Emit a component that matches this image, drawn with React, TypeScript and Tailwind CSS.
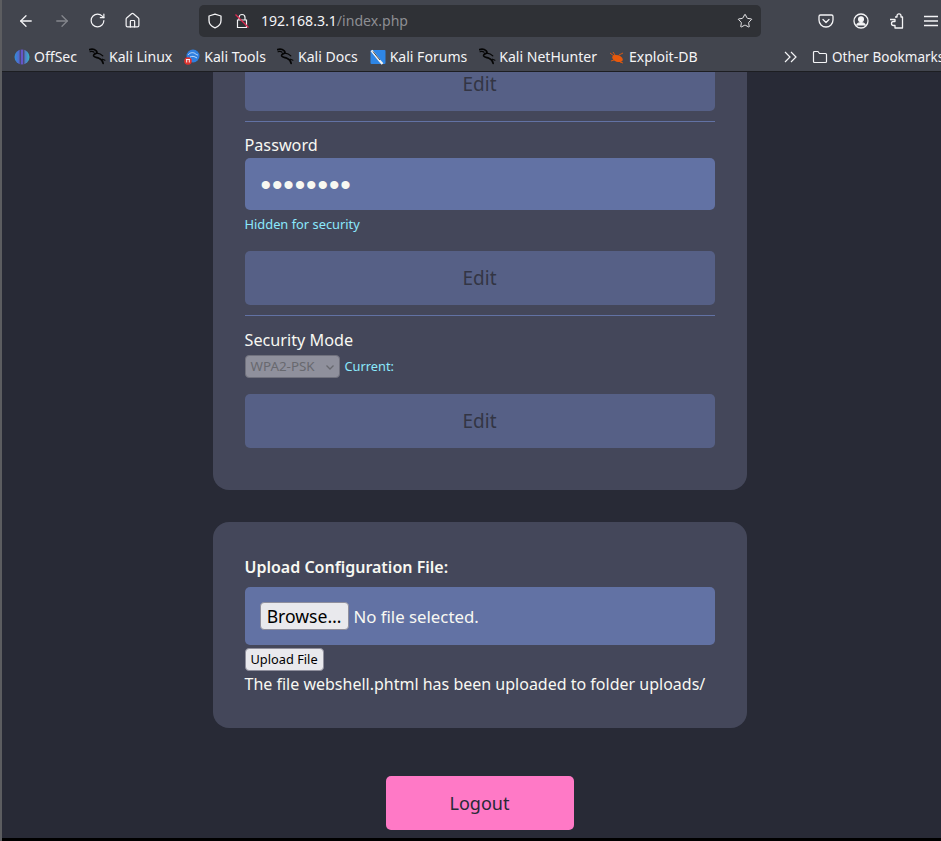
import React from 'react';
import { ArrowLeft, ArrowRight, RotateCw, Home, Star } from 'lucide-react';

const KaliIcon = () => (
    <svg viewBox="0 0 16 16" className="h-[17px] w-[17px] shrink-0" fill="none" stroke="#050505" strokeWidth="1.600" strokeLinecap="round" strokeLinejoin="round">
        <path d="M0.500 1.500c2.500-.8 4.800-.2 6.300 1.200 1 1 .9 2-.2 2.400-1.500.5-2.700 1.300-2.100 2.600.6 1.200 2.800 1.200 4.800 1.900 2.200.8 3.600 2.500 4 4.900" />
        <path d="M7.500 4.800c2 .2 4 1 5.500 2.600" strokeWidth="1.100" />
        <path d="M1 3.500c1.500-.5 2.800-.3 3.800.5" strokeWidth="1.100" />
        <path d="M12.500 10.500l2.500 1" strokeWidth="1" />
    </svg>
);

const OffSecIcon = () => (
    <svg viewBox="0 0 16 16" className="h-4 w-4 shrink-0">
        <defs>
            <linearGradient id="offsec" x1="0" y1="0" x2="1" y2="0">
                <stop offset="0" stopColor="#2f8fd8" />
                <stop offset="0.5" stopColor="#6a4fc8" />
                <stop offset="1" stopColor="#35b6c8" />
            </linearGradient>
        </defs>
        <circle cx="8" cy="8" r="7.500" fill="url(#offsec)" />
        <path d="M6.200 0.500v15M9.800 0.500v15" stroke="#42454e" strokeWidth="1" />
    </svg>
);

const KaliToolsIcon = () => (
    <svg viewBox="0 0 16 16" className="h-4 w-4 shrink-0">
        <circle cx="9" cy="7" r="6.500" fill="#2f7fe0" />
        <path d="M4 6c2-2.500 5-3 7-1.500 1 .8 2 1.500 3 1.500M6 8c2-1 4-1 7 1" stroke="#cfe4fb" strokeWidth="0.900" fill="none" />
        <circle cx="4" cy="12" r="3.800" fill="#e0322e" />
        <path d="M2.700 10.500v3M5.300 10.500v3M2 10.500h4" stroke="#fff" strokeWidth="0.900" />
    </svg>
);

const ForumsIcon = () => (
    <svg viewBox="0 0 16 16" className="h-4 w-4 shrink-0">
        <rect x="0.500" y="1" width="15" height="14" rx="1" fill="#2e86e6" />
        <path d="M1.500 1.500l8 10 3 3.500" stroke="#f2f2f2" strokeWidth="2.200" fill="none" />
        <path d="M3 2.500l7 8.500" stroke="#222" strokeWidth="0.800" fill="none" />
    </svg>
);

const ExploitIcon = () => (
    <svg viewBox="0 0 16 16" className="h-4 w-4 shrink-0">
        <ellipse cx="8.500" cy="9.500" rx="5.500" ry="3.300" fill="#e8590c" transform="rotate(18 8.500 9.500)" />
        <path d="M1 4l4 3M4 3l2 3M10 6l4-2M2 12l3-1M11 13l3 1" stroke="#e8590c" strokeWidth="0.900" />
    </svg>
);

const Bookmark = ({ icon, label }: { icon: React.ReactNode; label: string }) => (
    <div className="flex items-center gap-1 whitespace-nowrap">
        <div className="flex w-4 justify-center">{icon}</div>
        <span>{label}</span>
    </div>
);

const EditButton = ({ className = '' }: { className?: string }) => (
    <button
        type="button"
        disabled
        className={`h-[54px] w-full rounded-[5px] bg-[#6272a4] text-[19px] text-[#282a36] opacity-60 ${className}`}
    >
        Edit
    </button>
);

const Toolbar = () => (
    <div className="shrink-0 bg-[#42454e] text-[#f4f4f6]">
        <div className="flex h-[41px] items-center">
            <div className="flex w-[199px] items-center pl-[17px]">
                <ArrowLeft className="h-[18px] w-[18px]" strokeWidth={1.7} />
                <ArrowRight className="ml-[18px] h-[18px] w-[18px] text-[#85878d]" strokeWidth={1.7} />
                <RotateCw className="ml-[18px] h-[17px] w-[17px]" strokeWidth={1.7} />
                <Home className="ml-[18px] h-[17px] w-[17px]" strokeWidth={1.7} />
            </div>
            <div className="flex h-8 w-[562px] items-center rounded-[5px] bg-[#2f3136] pl-[8px] pr-[8px]">
                <svg viewBox="0 0 16 16" className="h-4 w-4" fill="none" stroke="#f4f4f6" strokeWidth="1.300">
                    <path d="M8 1.200l6 1.800v4.500c0 3.500-2.500 6-6 7.300-3.500-1.300-6-3.800-6-7.300V3z" strokeLinejoin="round" />
                </svg>
                <svg viewBox="0 0 16 16" className="ml-[11px] h-4 w-4" fill="none" strokeWidth="1.200">
                    <path d="M5 7V4.500a3 3 0 016 0V7M3.500 7h9v7.500h-9z" stroke="#f4f4f6" />
                    <path d="M1.500 1.500l13 13" stroke="#e22850" />
                </svg>
                <span className="ml-[11px] text-[14.100px]">
                    192.168.3.1<span className="text-[#8d8e93]">/index.php</span>
                </span>
                <Star className="ml-auto h-4 w-4" strokeWidth={1.4} />
            </div>
            <div className="flex flex-1 items-center pl-[57px]">
                <svg viewBox="0 0 16 16" className="h-4 w-4" fill="none" stroke="#f4f4f6" strokeWidth="1.300" strokeLinecap="round" strokeLinejoin="round">
                    <path d="M2.500 2h11a1.500 1.500 0 011.500 1.500V7a7 7 0 01-14 0V3.500A1.500 1.500 0 012.500 2z" />
                    <path d="M5 6.500l3 3 3-3" />
                </svg>
                <svg viewBox="0 0 16 16" className="ml-[19px] h-4 w-4" fill="none" stroke="#f4f4f6" strokeWidth="1.300">
                    <circle cx="8" cy="8" r="7" />
                    <circle cx="8" cy="6.200" r="2.400" fill="#f4f4f6" />
                    <path d="M3.500 12.500c1-2 2.500-2.800 4.500-2.800s3.500.8 4.500 2.800" fill="#f4f4f6" />
                </svg>
                <svg viewBox="0 0 16 16" className="ml-[19px] h-4 w-4" fill="none" stroke="#f4f4f6" strokeWidth="1.300" strokeLinejoin="round">
                    <path d="M7 4h2V2.800a2 2 0 014 0V4h1.500v11H7v-2.500H5.500a2 2 0 010-4H7V6.500H2" />
                </svg>
                <svg viewBox="0 0 16 16" className="ml-[19px] h-4 w-4" stroke="#f4f4f6" strokeWidth="1.300">
                    <path d="M1 3.500h14M1 8h14M1 12.500h14" />
                </svg>
            </div>
        </div>
        <div className="flex h-[31px] items-center overflow-hidden border-b border-[#1d1e22] pl-[14px] pt-px text-[14.050px]">
            <div className="flex w-[763px] shrink-0 items-center gap-3">
                <Bookmark icon={<OffSecIcon />} label="OffSec" />
                <Bookmark icon={<KaliIcon />} label="Kali Linux" />
                <Bookmark icon={<KaliToolsIcon />} label="Kali Tools" />
                <Bookmark icon={<KaliIcon />} label="Kali Docs" />
                <Bookmark icon={<ForumsIcon />} label="Kali Forums" />
                <Bookmark icon={<KaliIcon />} label="Kali NetHunter" />
                <Bookmark icon={<ExploitIcon />} label="Exploit-DB" />
            </div>
            <svg viewBox="0 0 16 16" className="ml-[6px] h-4 w-4 shrink-0" fill="none" stroke="#f4f4f6" strokeWidth="1.200">
                <path d="M2 3l5 5-5 5M8 3l5 5-5 5" />
            </svg>
            <div className="ml-[13px] flex shrink-0 items-center gap-1 whitespace-nowrap">
                <svg viewBox="0 0 16 16" className="h-4 w-4" fill="none" stroke="#f4f4f6" strokeWidth="1.200" strokeLinejoin="round">
                    <path d="M1.500 3.500a1 1 0 011-1h3.500l1.500 2h6a1 1 0 011 1v7a1 1 0 01-1 1h-11a1 1 0 01-1-1z" />
                </svg>
                <span className="pt-px text-[13.500px]">Other Bookmarks</span>
            </div>
        </div>
    </div>
);

export default function App() {
    return (
        <div className="flex h-[841px] w-[941px] flex-col overflow-hidden border-l-2 border-[#5c5d60] bg-[#282a36] font-['Noto_Sans',sans-serif] text-[#f8f8f2]">
            <div className="-ml-0.5">
                <Toolbar />
            </div>
            <main className="flex min-h-0 flex-1 flex-col items-center justify-end overflow-hidden pb-2 pl-4">
                <section className="w-[534px] shrink-0 rounded-2xl bg-[#44475a] px-8 pb-[42px]">
                    <EditButton />
                    <hr className="mt-[10px] border-[#6272a4]" />
                    <div className="mt-3 text-[16.200px] leading-[22px]">Password</div>
                    <div className="mt-[2px] flex h-[52px] items-center rounded-[5px] bg-[#6272a4] px-4 pt-[2px] font-['Liberation_Sans',sans-serif] text-[30px] leading-none tracking-[0.900px]">
                        ••••••••
                    </div>
                    <div className="mt-[5px] text-[12.850px] leading-[18px] text-[#8be9fd]">Hidden for security</div>
                    <EditButton className="mt-[18px]" />
                    <hr className="mt-[10px] border-[#6272a4]" />
                    <div className="mt-[13px] text-[16.200px] leading-[22px]">Security Mode</div>
                    <div className="mt-[3px] flex h-[24px] items-center gap-[5px]">
                        <div className="flex h-[23px] w-[95px] items-center justify-between rounded-[4px] border border-[#70717d] bg-[#8f909c] pl-[5px] pr-[4px] pt-px text-[13.400px] text-[#68696f]">
                            WPA2-PSK
                            <svg viewBox="0 0 10 10" className="h-[10px] w-[10px]" fill="none" stroke="#68696f" strokeWidth="1.300">
                                <path d="M1.500 3.500L5 7l3.500-3.500" />
                            </svg>
                        </div>
                        <span className="pt-px text-[12.800px] text-[#8be9fd]">Current:</span>
                    </div>
                    <EditButton className="mt-[16px]" />
                </section>
                <section className="mt-8 w-[534px] shrink-0 rounded-2xl bg-[#44475a] px-8 pb-[31px] pt-[34px]">
                    <div className="text-base font-semibold leading-[22px]">Upload Configuration File:</div>
                    <div className="mt-[9px] flex h-[58px] items-center rounded-[5px] bg-[#6272a4] pl-[15px] text-[16.800px]">
                        <button type="button" className="flex h-[28px] w-[89px] items-center justify-center rounded-[4px] border border-[#8f8f9d] bg-[#e9e9ed] pt-px text-[17.600px] text-black">
                            Browse…
                        </button>
                        <span className="ml-[5px] pt-px">No file selected.</span>
                    </div>
                    <button type="button" className="mt-[3px] flex h-[23px] items-center rounded-[4px] border border-[#8f8f9d] bg-[#e9e9ed] px-[5px] text-[12.800px] text-black">
                        Upload File
                    </button>
                    <div className="text-base leading-[26px]">The file webshell.phtml has been uploaded to folder uploads/</div>
                </section>
                <button type="button" className="mt-12 h-[54px] w-[188px] shrink-0 rounded-[5px] bg-[#ff79c6] text-[18px] text-[#282a36]">
                    Logout
                </button>
            </main>
            <div className="-ml-0.5 h-[3px] shrink-0 bg-black" />
        </div>
    );
}
